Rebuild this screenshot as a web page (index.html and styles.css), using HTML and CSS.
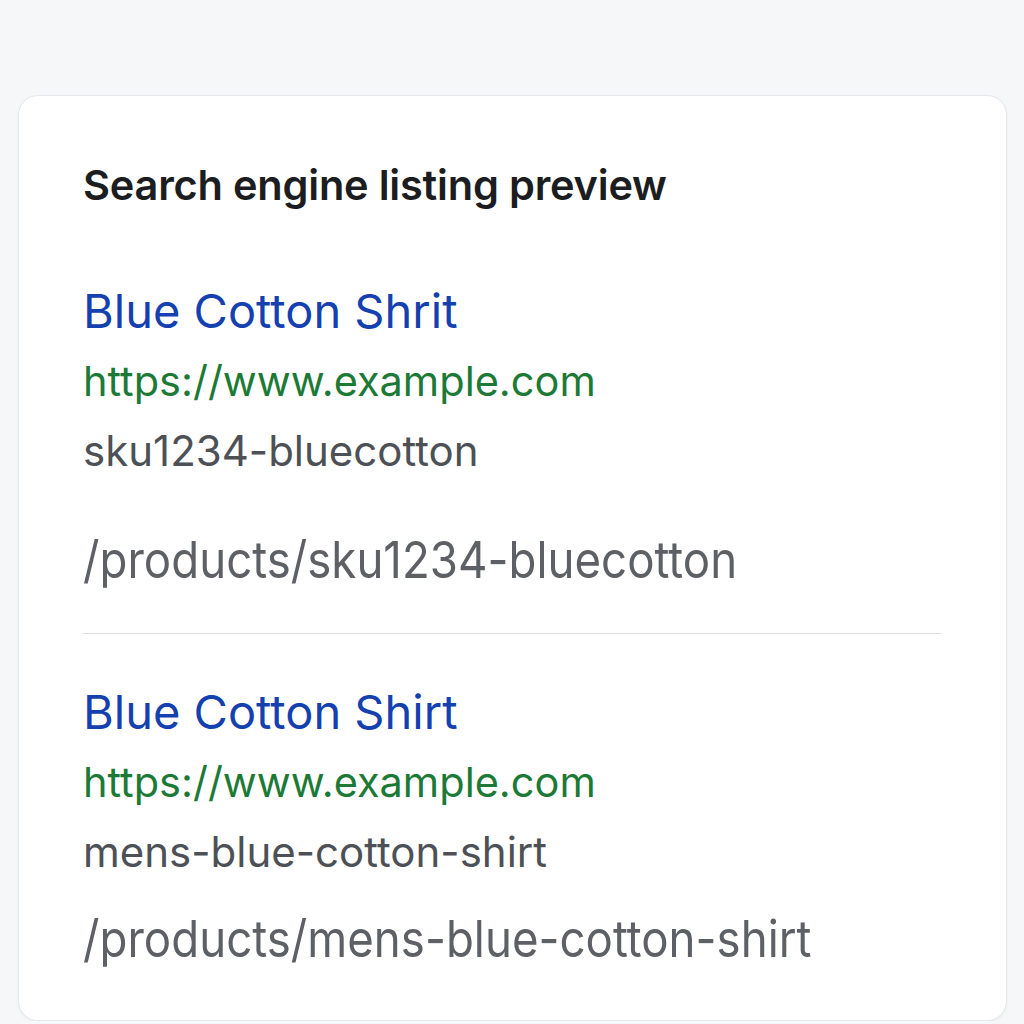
FILE: index.html
```html
<!DOCTYPE html>
<html lang="en">
<head>
  <meta charset="UTF-8" />
  <title>Search engine listing preview</title>
  <link rel="stylesheet" href="styles.css">
</head>
<body>
  <div class="card">
    <h2 class="card-title">Search engine listing preview</h2>

    <div class="listing">
      <div class="listing-title">Blue Cotton Shrit</div>
      <div class="listing-url">https://www.example.com</div>
      <div class="listing-slug">sku1234-bluecotton</div>
      <div class="listing-path">/products/sku1234-bluecotton</div>
    </div>

    <hr class="divider" />

    <div class="listing listing-tight">
      <div class="listing-title">Blue Cotton Shirt</div>
      <div class="listing-url">https://www.example.com</div>
      <div class="listing-slug">mens-blue-cotton-shirt</div>
      <div class="listing-path">/products/mens-blue-cotton-shirt</div>
    </div>
  </div>
</body>
</html>
```

FILE: styles.css
```css
body {
  margin: 0;
  padding: 95px 17px 0 18px;
  background: #f6f7f9;
  font-family: Inter, "Noto Sans", sans-serif;
}

.card {
  background: #fff;
  border: 1px solid #e6e8ec;
  border-radius: 20px;
  padding: 62px 65px 48px 64px;
  box-shadow: 0 1px 3px rgba(0,0,0,0.05);
  height: 926px;
  box-sizing: border-box;
}

.card-title {
  margin: 0 0 71px;
  font-size: 41.5px;
  font-weight: 600;
  color: #1b1d20;
  line-height: 54px;
  letter-spacing: -0.2px;
}

.listing-title {
  font-size: 47px;
  line-height: 56px;
  color: #1440b0;
}

.listing-url {
  margin-top: 14px;
  font-size: 41.5px;
  line-height: 56px;
  color: #1c7a36;
}

.listing-slug {
  margin-top: 14px;
  font-size: 42px;
  line-height: 56px;
  color: #4d5156;
}

.listing-path {
  margin-top: 53px;
  font-size: 51px;
  line-height: 56px;
  color: #5d6166;
  transform: scaleX(0.895);
  transform-origin: left;
}

.listing-tight .listing-path {
  margin-top: 31px;
}

.divider {
  border: none;
  border-top: 1.5px solid #dcdee2;
  margin: 45px 0 50px;
}
```
